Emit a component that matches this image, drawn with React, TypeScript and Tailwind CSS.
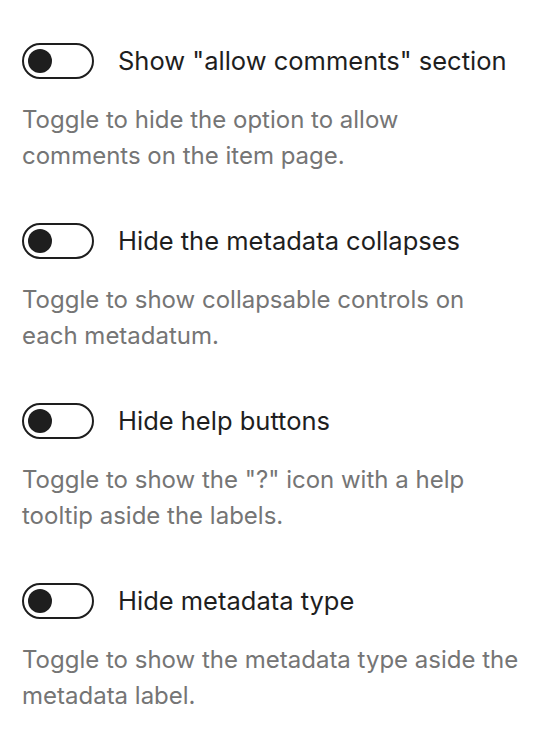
import React from "react";

const items = [
  { label: 'Show "allow comments" section', desc: "Toggle to hide the option to allow comments on the item page." },
  { label: "Hide the metadata collapses", desc: "Toggle to show collapsable controls on each metadatum." },
  { label: "Hide help buttons", desc: 'Toggle to show the "?" icon with a help tooltip aside the labels.' },
  { label: "Hide metadata type", desc: "Toggle to show the metadata type aside the metadata label." },
];

function Toggle() {
  return (
    <span className="flex items-center w-[72px] h-[36px] shrink-0 rounded-full border-2 border-[#1e1e1e] bg-white px-[4px]">
      <span className="block w-[24px] h-[24px] rounded-full bg-[#1e1e1e]" />
    </span>
  );
}

export default function App() {
  return (
    <div className="min-h-[746px] w-[542px] bg-white pl-[22px] pt-[43px]" style={{ fontFamily: "Inter, 'Noto Sans', sans-serif" }}>
      <div className="flex flex-col">
        {items.map((it) => (
          <div key={it.label} className="h-[180px]">
            <div className="flex items-center gap-[24px]">
              <Toggle />
              <span className="text-[25.5px] leading-[36px] text-[#1e1e1e]">{it.label}</span>
            </div>
            <p className="mt-[23px] w-[497px] text-[24px] leading-[36px] text-[#757575]">{it.desc}</p>
          </div>
        ))}
      </div>
    </div>
  );
}
